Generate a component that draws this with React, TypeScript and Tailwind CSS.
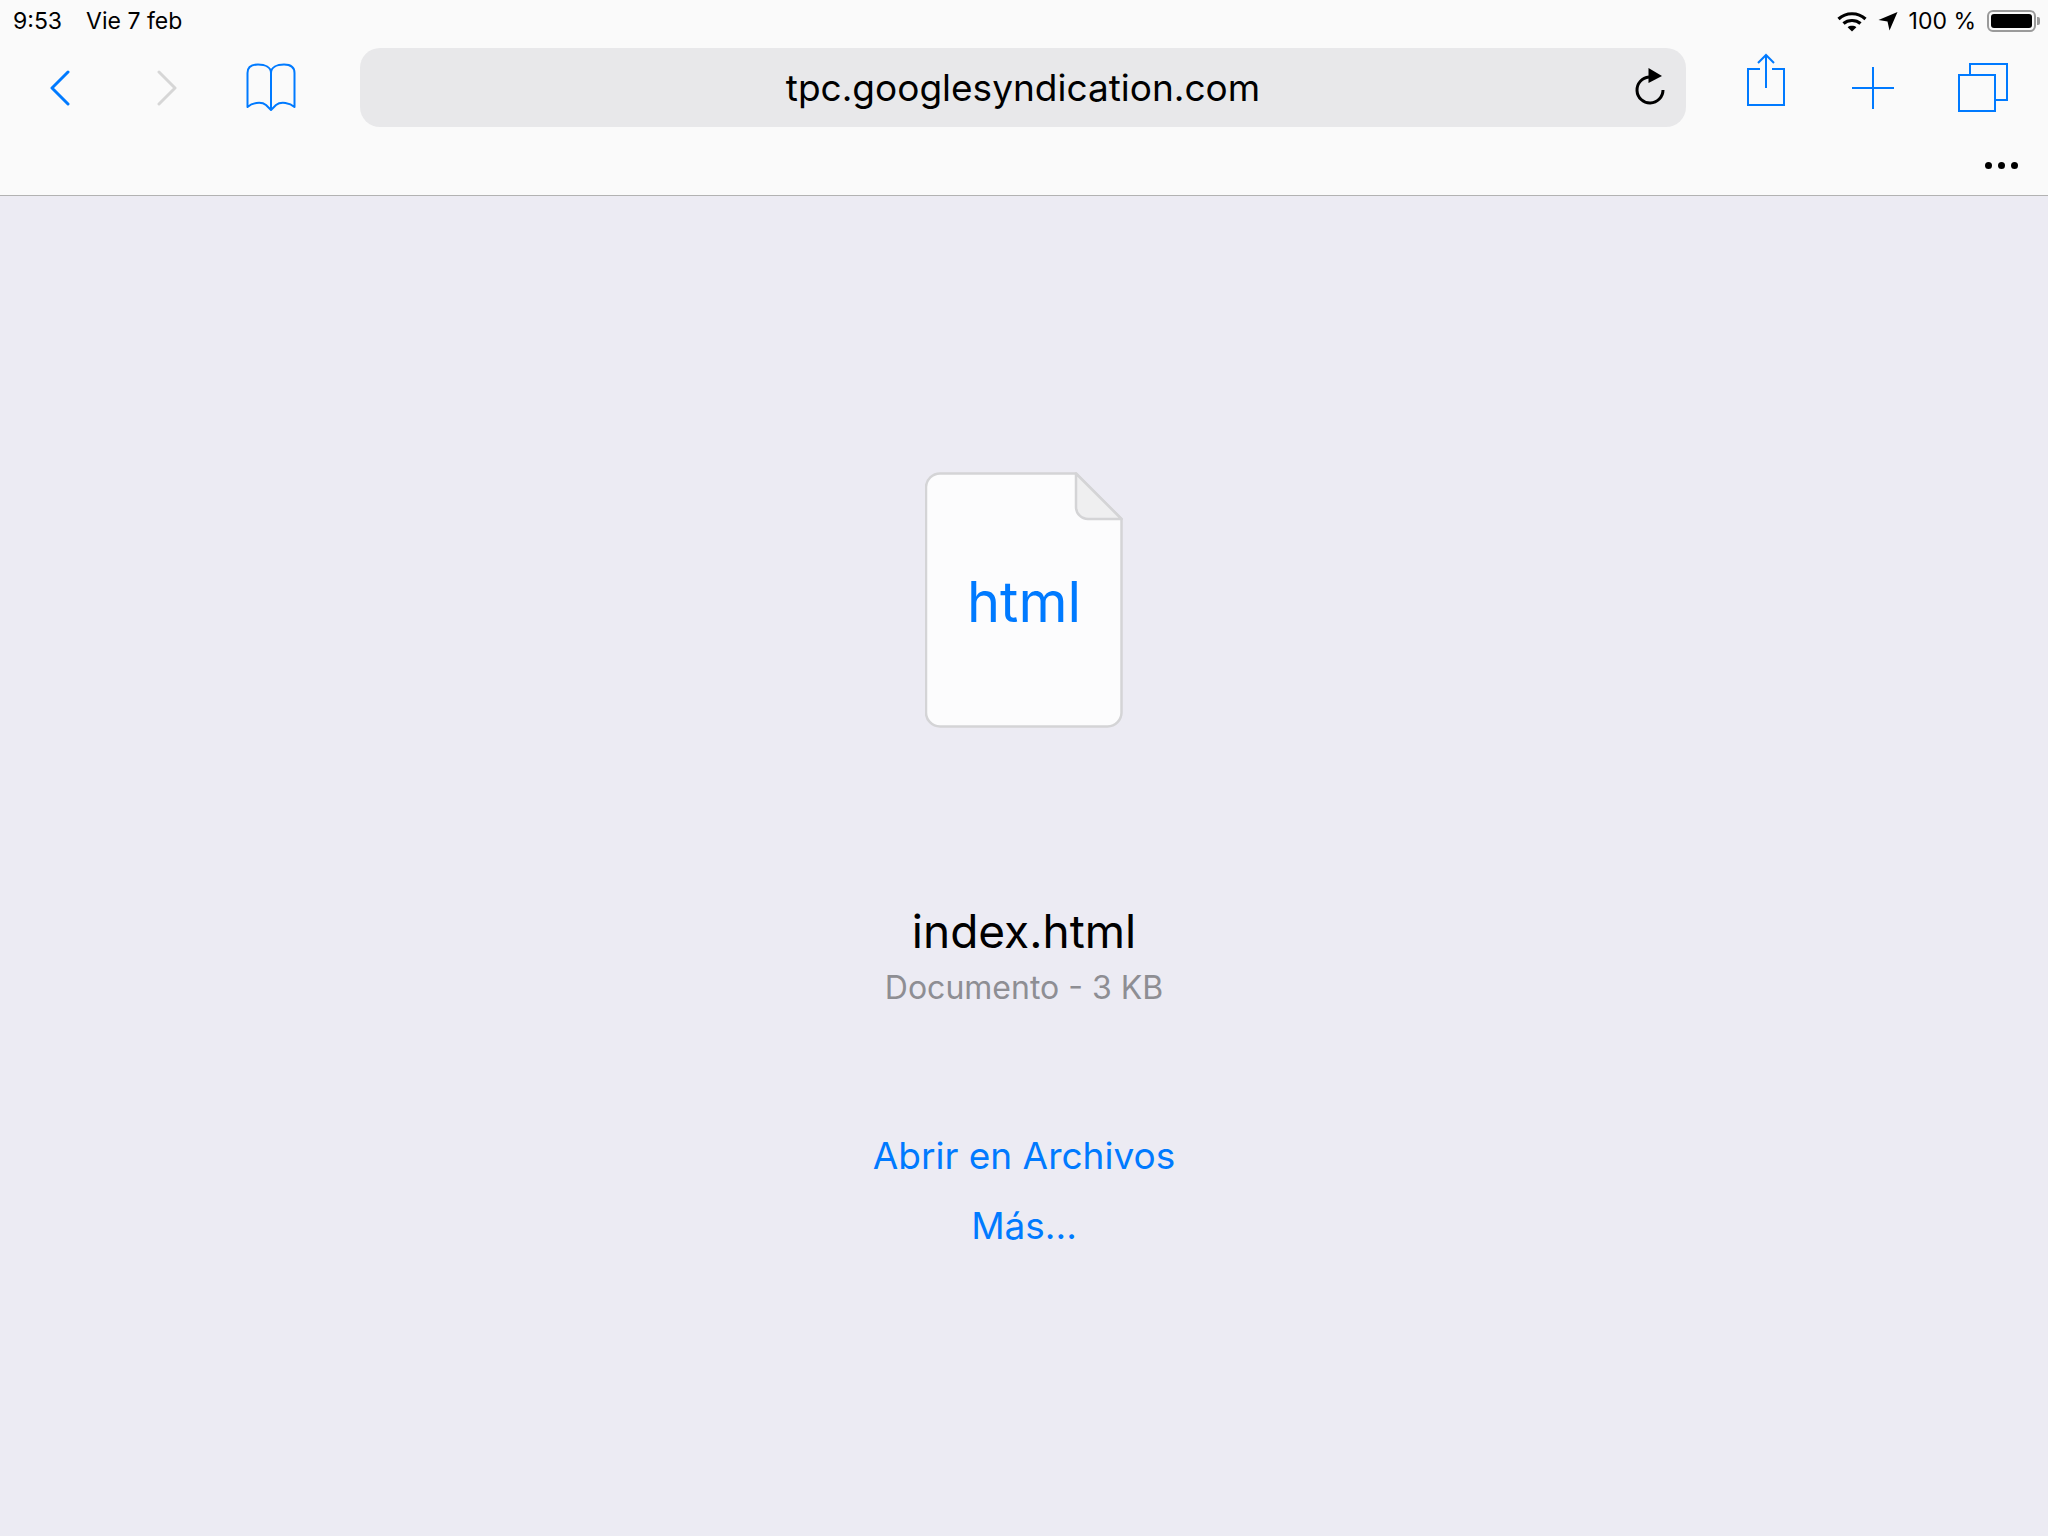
const font = "font-['Inter','Liberation_Sans',sans-serif]";

const Wifi = () => (
  <svg width="30" height="21" viewBox="0 0 30 21" fill="none" stroke="#000" strokeWidth="3.2" aria-hidden="true">
    <path d="M1.5 8 C9 1 21 1 28.5 8" />
    <path d="M6.5 12.5 C11 8.5 19 8.5 23.5 12.5" />
    <path d="M15 20.5 L10.6 16.2 C13 14.3 17 14.3 19.4 16.2 Z" fill="#000" stroke="none" />
  </svg>
);

const LocationArrow = () => (
  <svg width="20" height="20" viewBox="0 0 20 20" aria-hidden="true">
    <path d="M19.5 1 L11.5 19.5 L9.5 10.5 L0.5 9 Z" fill="#000" />
  </svg>
);

const Battery = () => (
  <div className="flex items-center">
    <div className="flex h-[22px] w-[49px] items-center rounded-[6px] border-2 border-[#9a9a9a] p-[2px]">
      <div className="h-full w-full rounded-[3px] bg-black" />
    </div>
    <div className="ml-px h-[8px] w-[3px] rounded-r-[2px] bg-[#9a9a9a]" />
  </div>
);

const Chevron = ({ flip, color }: { flip?: boolean; color: string }) => (
  <svg width="20" height="36" viewBox="0 0 20 36" fill="none" stroke={color} strokeWidth="3" strokeLinecap="round" strokeLinejoin="round" className={flip ? "-scale-x-100" : ""} aria-hidden="true">
    <path d="M18 2 L2 18 L18 34" />
  </svg>
);

const Bookmarks = () => (
  <svg width="50" height="49" viewBox="0 0 50 49" fill="none" stroke="#007aff" strokeWidth="2" strokeLinejoin="round" aria-hidden="true">
    <path d="M1.5 44 V10 C1.5 4 6 1.5 12 1.5 C19 1.5 25 4 25 10 C25 4 31 1.5 38 1.5 C44 1.5 48.5 4 48.5 10 V44 C44 40 35 38 30 42 L25 47 L20 42 C15 38 6 40 1.5 44 Z" />
    <path d="M25 10 V47" />
  </svg>
);

const Reload = () => (
  <svg width="32" height="38" viewBox="0 0 32 38" fill="none" aria-hidden="true">
    <path d="M15 9 A13 13 0 1 0 29 22" stroke="#000" strokeWidth="3" />
    <path d="M14.5 0 L28 8 L14.5 15 Z" fill="#000" />
  </svg>
);

const Share = () => (
  <svg width="38" height="53" viewBox="0 0 38 53" fill="none" stroke="#007aff" strokeWidth="2" aria-hidden="true">
    <path d="M13 16 H1 V52 H37 V16 H25" />
    <path d="M19 2 V35" />
    <path d="M11 10 L19 2 L27 10" />
  </svg>
);

const Plus = () => (
  <svg width="42" height="42" viewBox="0 0 42 42" stroke="#007aff" strokeWidth="2" aria-hidden="true">
    <path d="M21 0 V42 M0 21 H42" />
  </svg>
);

const Tabs = () => (
  <svg width="50" height="49" viewBox="0 0 50 49" fill="none" stroke="#007aff" strokeWidth="2" aria-hidden="true">
    <rect x="1" y="12" width="36" height="36" />
    <path d="M12 12 V1 H49 V37 H37" />
  </svg>
);

const DocumentIcon = () => (
  <div className="relative h-[256px] w-[198px]">
    <svg width="198" height="256" viewBox="0 0 198 256" aria-hidden="true">
      <path d="M15 1.5 H151 L196.5 47 V240 A14 14 0 0 1 182.5 254.5 H15 A14 14 0 0 1 1 240 V15 A14 14 0 0 1 15 1.5 Z" fill="#fcfcfd" stroke="#d4d4d6" strokeWidth="2.5" />
      <path d="M151 1.5 L196.5 47 H163 A12 12 0 0 1 151 35 Z" fill="#efeff0" stroke="#d4d4d6" strokeWidth="2.5" strokeLinejoin="round" />
    </svg>
    <span className="absolute inset-x-0 top-[96px] text-center text-[56px] leading-[68px] text-[#007aff]">html</span>
  </div>
);

export default function App() {
  return (
    <div className={`${font} flex h-screen flex-col overflow-hidden bg-[#ecebf3] text-black`}>
      <header className="h-[196px] border-b border-[#b2b2b2] bg-[#fafafa]">
        <div className="flex h-[48px] items-start justify-between pl-[13px] pr-[8px] pt-[6px]">
          <div className="flex gap-[24px] text-[23px] leading-[30px]">
            <span>9:53</span>
            <span>Vie 7 feb</span>
          </div>
          <div className="flex items-center gap-[11px] text-[23px] leading-[30px]">
            <Wifi />
            <LocationArrow />
            <span>100 %</span>
            <Battery />
          </div>
        </div>
        <div className="flex h-[79px] items-center pl-[50px] pr-[40px]">
          <Chevron color="#007aff" />
          <div className="ml-[87px]">
            <Chevron flip color="#d6d6d6" />
          </div>
          <div className="ml-[69px]">
            <Bookmarks />
          </div>
          <div className="relative ml-[64px] flex h-[79px] flex-1 items-center justify-center rounded-[20px] bg-[#e8e8ea]">
            <span className="text-[37px] leading-[48px]">tpc.googlesyndication.com</span>
            <div className="absolute right-[20px] top-[20px]">
              <Reload />
            </div>
          </div>
          <div className="ml-[61px] -mt-[16px]">
            <Share />
          </div>
          <div className="ml-[67px]">
            <Plus />
          </div>
          <div className="ml-[64px]">
            <Tabs />
          </div>
        </div>
        <div className="flex justify-end gap-[6px] pr-[30px] pt-[35px]">
          <span className="h-[7px] w-[7px] rounded-full bg-black" />
          <span className="h-[7px] w-[7px] rounded-full bg-black" />
          <span className="h-[7px] w-[7px] rounded-full bg-black" />
        </div>
      </header>
      <main className="flex flex-1 flex-col items-center pt-[276px]">
        <DocumentIcon />
        <h1 className="mt-[175px] text-[46px] font-normal leading-[56px]">index.html</h1>
        <p className="mt-[9px] text-[32px] leading-[40px] text-[#8e8e93]">Documento - 3 KB</p>
        <a className="mt-[124px] text-[37px] leading-[48px] text-[#007aff]">Abrir en Archivos</a>
        <a className="mt-[22px] text-[37px] leading-[48px] text-[#007aff]">Más...</a>
      </main>
    </div>
  );
}
